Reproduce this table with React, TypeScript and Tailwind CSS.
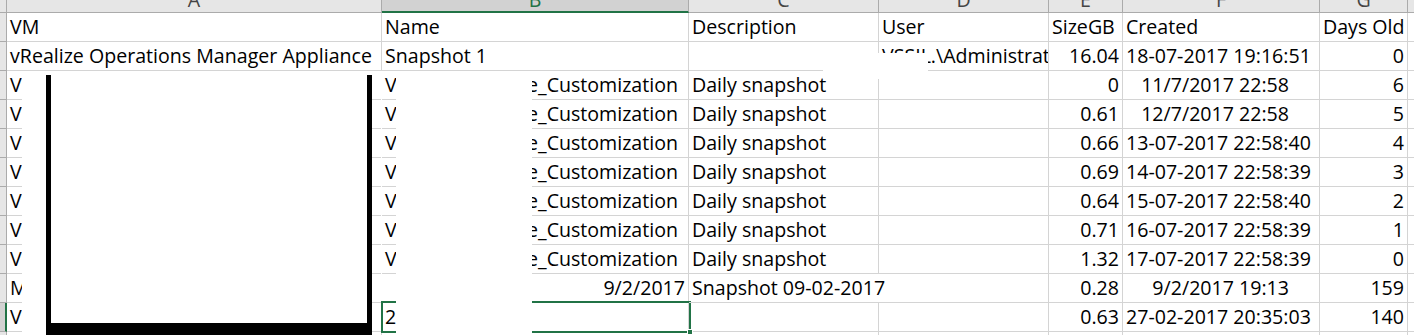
import React from 'react';
import clsx from 'clsx';

type Align = 'left' | 'right';

interface Cell {
  text?: string;
  node?: React.ReactNode;
  align?: Align;
  pad?: string;
  spill?: boolean;
}

const LETTERS = ['A', 'B', 'C', 'D', 'E', 'F', 'G'];
const SELECTED_COL = 1;
const SELECTED_ROW = 10;

const r = (text: string, pad = 'pr-[3px]'): Cell => ({ text, align: 'right', pad });
const l = (text: string): Cell => ({ text });

// "V" ... "e_Customization" name cells, middle part blanked out
const maskedName: Cell = {
  node: (
    <div className="flex justify-between pr-[10px]">
      <span>V</span>
      <span>te_Customization</span>
    </div>
  ),
};

const daily = (size: string, created: Cell, days: string): Cell[] => [
  l('V'),
  maskedName,
  l('Daily snapshot'),
  {},
  r(size),
  created,
  r(days),
];

const rows: Cell[][] = [
  [l('VM'), l('Name'), l('Description'), l('User'), l('SizeGB'), l('Created'), l('Days Old')],
  [
    l('vRealize Operations Manager Appliance'),
    l('Snapshot 1'),
    {},
    l('VSSIL.\\Administrator'),
    r('16.04'),
    l('18-07-2017 19:16:51'),
    r('0'),
  ],
  daily('0', r('11/7/2017 22:58', 'pr-[30px]'), '6'),
  daily('0.61', r('12/7/2017 22:58', 'pr-[30px]'), '5'),
  daily('0.66', l('13-07-2017 22:58:40'), '4'),
  daily('0.69', l('14-07-2017 22:58:39'), '3'),
  daily('0.64', l('15-07-2017 22:58:40'), '2'),
  daily('0.71', l('16-07-2017 22:58:39'), '1'),
  daily('1.32', l('17-07-2017 22:58:39'), '0'),
  [
    l('M'),
    r('9/2/2017'),
    { text: 'Snapshot 09-02-2017', spill: true },
    {},
    r('0.28'),
    r('9/2/2017 19:13', 'pr-[30px]'),
    r('159'),
  ],
  [l('V'), l('2'), {}, {}, r('0.63'), l('27-02-2017 20:35:03'), r('140')],
  [{}, {}, {}, {}, {}, {}, {}],
];

const ColumnHeader = () => (
  <>
    <div className="h-[13px] bg-[#e6e6e6] border-b border-r border-[#ababab]" />
    {LETTERS.map((letter, i) => (
      <div
        key={letter}
        className={clsx(
          'h-[13px] flex justify-center overflow-hidden border-r border-[#ababab]',
          i === SELECTED_COL
            ? 'bg-[#d2d2d2] border-b-2 border-b-[#217346] text-[#217346]'
            : 'bg-[#e6e6e6] border-b text-[#444444]'
        )}
      >
        <span className="-mt-[10px] leading-[19px]">{letter}</span>
      </div>
    ))}
    <div className="h-[13px] bg-[#e6e6e6] border-b border-[#ababab]" />
  </>
);

const SheetRow = ({ cells, index }: { cells: Cell[]; index: number }) => {
  const selected = index === SELECTED_ROW;
  return (
    <>
      <div
        className={clsx(
          'h-[29px] border-b border-[#ababab]',
          selected ? 'bg-[#d2d2d2] border-r-2 border-r-[#217346]' : 'bg-[#e6e6e6] border-r'
        )}
      />
      {cells.map((cell, i) => (
        <div
          key={i}
          className={clsx(
            'h-[29px] border-b border-[#d4d4d4] whitespace-nowrap leading-[28px] relative',
            !cell.spill && 'border-r',
            cell.spill ? 'overflow-visible z-10' : 'overflow-hidden',
            cell.align === 'right' ? clsx('text-right', cell.pad) : 'pl-[3px]'
          )}
        >
          {cell.node ?? cell.text}
        </div>
      ))}
      <div className="h-[29px] border-b border-[#d4d4d4]" />
    </>
  );
};

export default function App() {
  return (
    <div className="w-[1414px] h-[335px] overflow-hidden bg-white text-black text-[19.6px] [font-family:'Open_Sans',sans-serif]">
      <div className="relative">
        <div className="grid grid-cols-[7px_375px_307px_190px_170px_74px_197px_88px_1fr]">
          <ColumnHeader />
          {rows.map((cells, i) => (
            <SheetRow key={i} cells={cells} index={i} />
          ))}
        </div>

        {/* active cell B11 */}
        <div className="absolute left-[381px] top-[301px] w-[310px] h-[32px] border-2 border-[#217346]" />
        <div className="absolute left-[687px] top-[329px] w-[6px] h-[6px] bg-[#217346] border border-white" />

        {/* blanked-out regions */}
        <div className="absolute left-[22px] top-[71px] w-[350px] h-[264px] bg-white" />
        <div className="absolute left-[46px] top-[75px] w-[326px] h-[260px] bg-white border-x-[5px] border-b-[12px] border-black" />
        <div className="absolute left-[381px] top-[71px] w-[1px] h-[230px] bg-white" />
        <div className="absolute left-[396px] top-[71px] w-[136px] h-[264px] bg-white" />
        <div className="absolute left-[823px] top-[53px] w-[105px] h-[26px] bg-white" />
      </div>
    </div>
  );
}
